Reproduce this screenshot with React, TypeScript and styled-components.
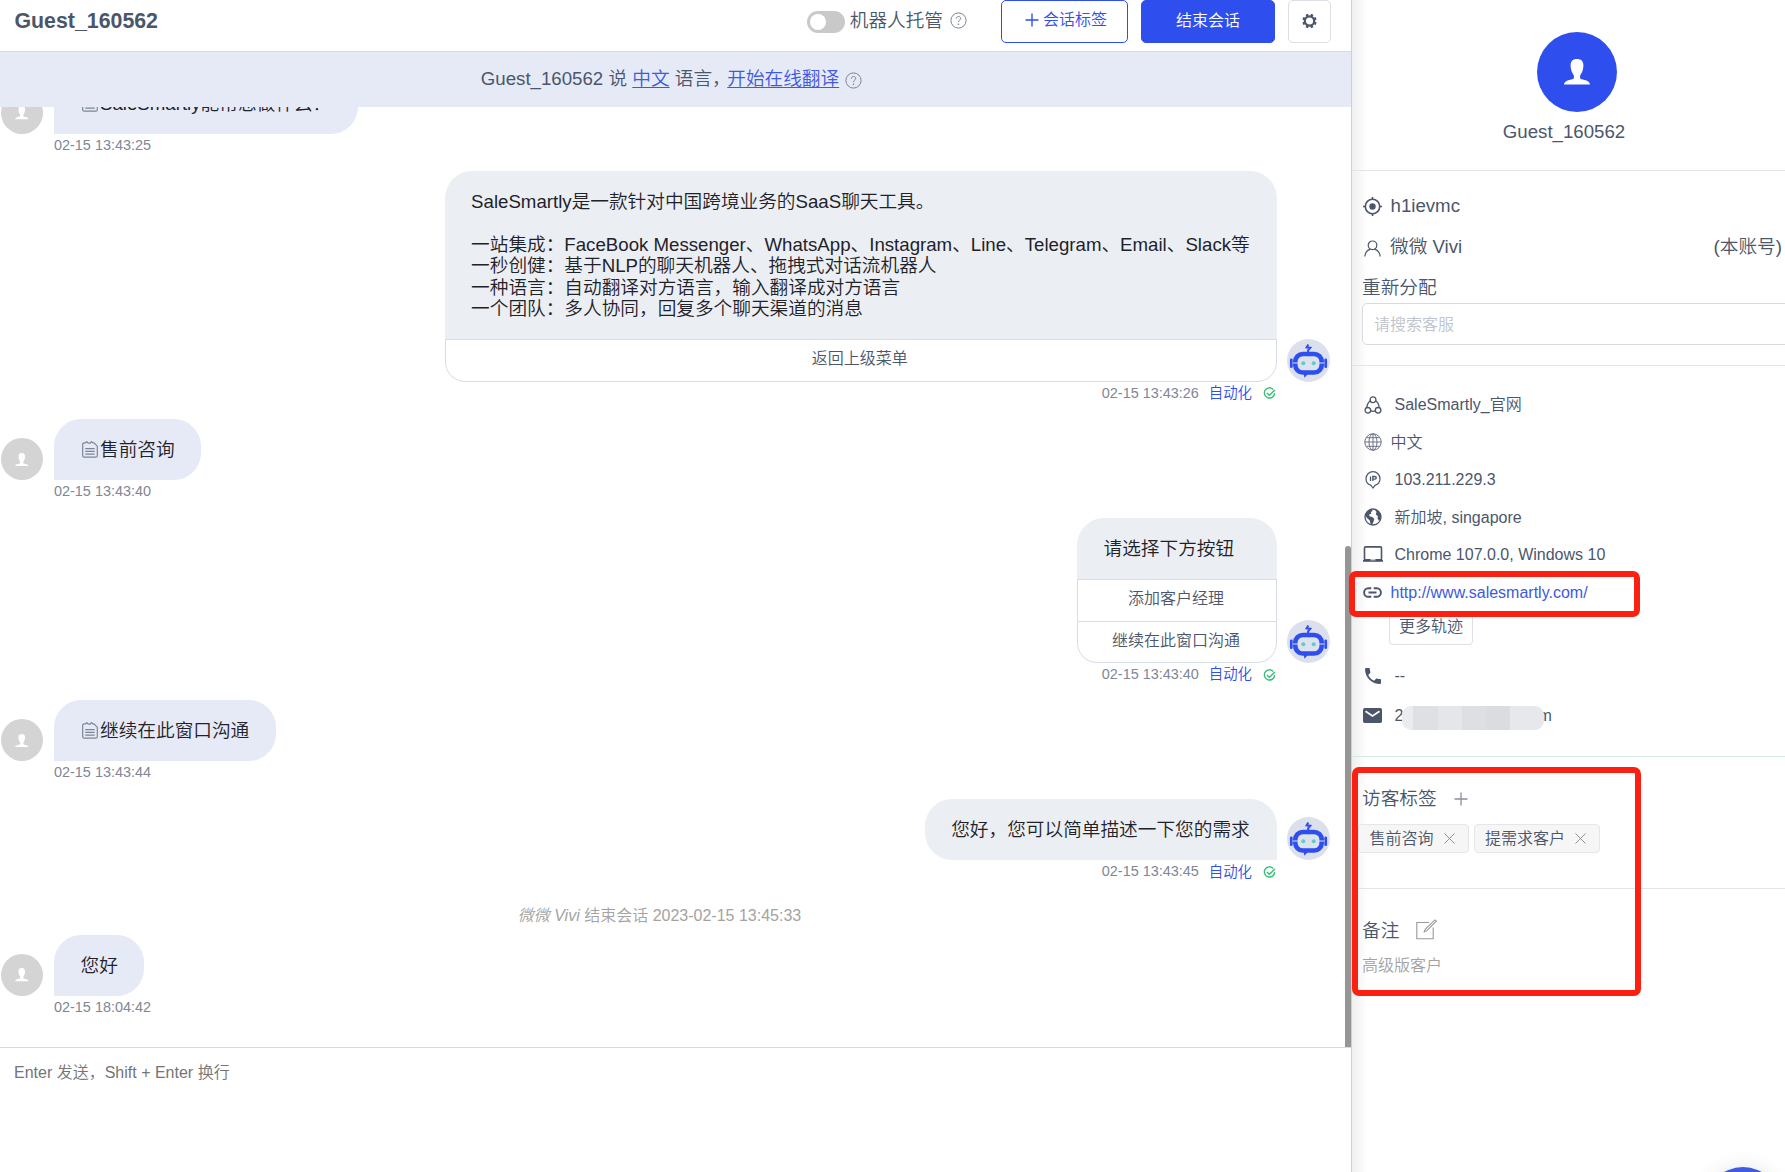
import React from "react";
import styled, { createGlobalStyle, css } from "styled-components";

const Global = createGlobalStyle`
  html, body { margin: 0; padding: 0; background: #fff; }
  body {
    font-family: "Liberation Sans", "Noto Sans CJK SC", sans-serif;
    font-size: 16px;
    font-weight: 350;
    line-height: 1.2;
    color: #4b566b;
    overflow: hidden;
  }
  * { box-sizing: border-box; }
`;

const Screen = styled.div`
  position: relative;
  display: flex;
  width: 1785px;
  height: 1172px;
  overflow: hidden;
  background: #fff;
`;

/* ---------- chat column ---------- */

const Chat = styled.main`
  display: flex;
  flex-direction: column;
  width: 1352px;
  flex: none;
  border-right: 1px solid #cfd0d4;
`;

const Header = styled.header`
  display: flex;
  align-items: flex-start;
  height: 52px;
  flex: none;
  padding: 0 20px 0 14.500px;
  border-bottom: 1px solid #d3dae6;
`;

const Title = styled.h1`
  margin: 0 auto 0 0;
  font-size: 21.33px;
  line-height: 42px;
  font-weight: 700;
`;

const BotSwitch = styled.div`
  display: flex;
  align-items: center;
  height: 42px;
  font-size: 18.67px;
  margin-right: 34.500px;
  svg { margin: 0 0 1px 6.500px; }
`;

const Toggle = styled.span`
  display: flex;
  align-items: center;
  width: 37.5px;
  height: 22px;
  padding: 0 3px;
  margin: 2px 5px 0 0;
  border-radius: 11px;
  background: #c9c9c9;
  &::before {
    content: "";
    width: 16px;
    height: 16px;
    border-radius: 50%;
    background: #fff;
  }
`;

const Button = styled.button<{ $kind: "outline" | "solid" | "icon" }>`
  display: flex;
  align-items: center;
  justify-content: center;
  height: 43px;
  padding: 0 0 2px;
  border-radius: 5px;
  font: inherit;
  font-size: 16px;
  border: 1px solid #2f4eee;
  ${(p) =>
    p.$kind === "outline" &&
    css`width: 127px; background: #fff; color: #2f4eee; gap: 4px; margin-right: 13px; padding: 0 0 4px 3px;`}
  ${(p) =>
    p.$kind === "solid" &&
    css`width: 134px; background: #2f4eee; color: #fff; margin-right: 13px;`}
  ${(p) =>
    p.$kind === "icon" &&
    css`width: 43px; background: #fff; color: #4b566b; border-color: #dcdfe6; padding-bottom: 1px;`}
`;

const Banner = styled.div`
  display: flex;
  align-items: center;
  justify-content: center;
  height: 55px;
  flex: none;
  padding-right: 8px;
  background: #e5eaf6;
  font-size: 18.67px;
  white-space: pre;
  svg { margin: 1px 0 0 6px; }
`;

const Link = styled.a<{ $tight?: boolean }>`
  margin-left: ${(p) => (p.$tight ? -3.5 : 0)}px;
  color: #4059e0;
  text-decoration: underline;
  text-underline-offset: 2px;
  text-decoration-thickness: 1px;
`;

const Messages = styled.section`
  display: flex;
  flex-direction: column;
  justify-content: flex-end;
  height: 940px;
  flex: none;
  padding-bottom: 51px;
  position: relative;
  overflow: hidden;
`;

const ScrollThumb = styled.div`
  position: absolute;
  right: 0;
  bottom: 0;
  width: 6px;
  height: 501px;
  border-radius: 3px 3px 0 0;
  background: #969696;
`;

const Message = styled.div<{ $out?: boolean; $gap?: number }>`
  display: flex;
  flex: none;
  align-items: flex-end;
  flex-direction: ${(p) => (p.$out ? "row-reverse" : "row")};
  gap: ${(p) => (p.$out ? 10 : 11)}px;
  padding: ${(p) => (p.$out ? "0 21px 0 0" : "0 0 0 1px")};
  margin-bottom: ${(p) => p.$gap ?? 14.5}px;
`;

const GuestAvatar = styled.div`
  display: flex;
  align-items: center;
  justify-content: center;
  width: 42px;
  height: 42px;
  margin-bottom: 23px;
  border-radius: 50%;
  background: #d4d4d4;
`;

const BotAvatar = styled.div`
  width: 43px;
  height: 43px;
  margin-bottom: 23px;
`;

const Stack = styled.div<{ $out?: boolean }>`
  display: flex;
  flex-direction: column;
  align-items: ${(p) => (p.$out ? "flex-end" : "flex-start")};
`;

const Bubble = styled.div<{ $out?: boolean; $menu?: boolean }>`
  overflow: hidden;
  min-width: ${(p) => (p.$menu ? 200 : 0)}px;
  border-radius: ${(p) => (p.$menu ? "27px 27px 20px 20px" : p.$out ? "27px 27px 0 27px" : "27px 27px 27px 0")};
  background: ${(p) => (p.$out ? "#ebeff4" : "#e5eaf6")};
`;

const BubbleText = styled.div<{ $out?: boolean }>`
  display: flex;
  align-items: center;
  padding: 20px ${(p) => (p.$out ? 27.3 : 26.5)}px 20px 26.500px;
  font-size: 18.67px;
  line-height: 21.33px;
  color: #1f2329;
  white-space: pre;
`;

const MenuOption = styled.div`
  height: 41.3px;
  padding: 0 2px 2px 0;
  line-height: 37px;
  text-align: center;
  font-size: 16px;
  background: #fff;
  border: 1px solid #d8dce3;
  border-bottom-width: 0;
  &:last-child {
    border-bottom-width: 1px;
    border-radius: 0 0 20px 20px;
    height: 42.5px;
  }
`;

const Meta = styled.div`
  display: flex;
  align-items: center;
  height: 23px;
  font-size: 14.43px;
  color: #808695;
  svg { margin: 1px 1px 0 0; }
`;

const MetaAuto = styled.span`
  margin: 1px 11px 0 10px;
  font-size: 14.4px;
  color: #2f4eee;
`;

const SystemNote = styled.div`
  height: 24px;
  flex: none;
  margin: 6px 0 7px;
  padding-right: 32px;
  line-height: 24px;
  text-align: center;
  color: #a3a3a3;
`;

const Composer = styled.div`
  flex: 1;
  border-top: 1px solid #d9d9d9;
  padding: 13px 14px;
  line-height: 24px;
  color: #757575;
`;

/* ---------- visitor column ---------- */

const Visitor = styled.aside`
  flex: 1;
  min-width: 0;
  overflow: hidden;
  background: linear-gradient(to right, #efeff0, #fff 15px);
`;

const Section = styled.section<{ $h: number; $tint?: string }>`
  height: ${(p) => p.$h}px;
  border-bottom: 1px solid ${(p) => p.$tint ?? "#e2e5e8"};
  padding-left: 10px;
`;

const Profile = styled(Section)`
  display: flex;
  flex-direction: column;
  align-items: center;
  width: 450px;
  padding: 32px 0 0;
`;

const ProfileAvatar = styled.div`
  display: flex;
  align-items: center;
  justify-content: center;
  width: 80px;
  height: 80px;
  border-radius: 50%;
  background: #2f4eee;
`;

const ProfileName = styled.div`
  margin-top: 7.500px;
  padding-right: 26px;
  font-size: 18.67px;
  line-height: 24px;
`;

const Row = styled.div<{ $h: number; $big?: boolean; $drop?: number }>`
  display: flex;
  align-items: center;
  height: ${(p) => p.$h}px;
  padding: ${(p) => p.$drop ?? 0}px 3px 0 0;
  font-size: ${(p) => (p.$big ? 18.67 : 16)}px;
  white-space: nowrap;
`;

const IconCell = styled.span<{ $gap?: number }>`
  display: flex;
  align-items: center;
  justify-content: center;
  width: 21px;
  margin-right: ${(p) => p.$gap ?? 11.5}px;
  flex: none;
`;

const HeadingIcon = styled.span<{ $lift?: number }>`
  display: flex;
  margin: 0 0 ${(p) => p.$lift ?? 0}px 17px;
`;

const Mine = styled.span`
  margin-left: auto;
`;

const Search = styled.div`
  width: 460px;
  height: 42px;
  padding-left: 11px;
  border: 1px solid #d8dbe0;
  border-radius: 5px;
  line-height: 41px;
  color: #c0c4cc;
  background: #fff;
`;

const PageLink = styled.a`
  color: #4059e0;
`;

const MoreButton = styled.div`
  width: 84px;
  height: 33.500px;
  margin: 0 0 0 27px;
  border: 1px solid #dcdfe6;
  border-radius: 4px;
  line-height: 30px;
  text-align: center;
`;

const Mosaic = styled.span`
  display: flex;
  width: 142px;
  height: 24px;
  margin: 3px -6px 0 -1px;
  z-index: 1;
  border-radius: 9px;
  overflow: hidden;
`;

const Block = styled.i<{ $w: number; $c: string }>`
  width: ${(p) => p.$w}px;
  background: ${(p) => p.$c};
`;

const Tags = styled.div`
  display: flex;
  gap: 5px;
  margin: 9px 0 0 -4px;
`;

const Tag = styled.span`
  display: flex;
  align-items: center;
  height: 29px;
  padding: 1px 13px 0 10.500px;
  gap: 10px;
  border: 1px solid #e6e6e8;
  border-radius: 4px;
  background: #f6f6f7;
  svg { margin-bottom: 1px; }
`;

const Note = styled.div`
  line-height: 24px;
  margin-top: 7px;
  color: #a3a3a3;
`;

/* Red annotation frames drawn over the interface */
const Highlight = styled.div<{ $top: number; $left: number; $w: number; $h: number }>`
  position: absolute;
  z-index: 3;
  top: ${(p) => p.$top}px;
  left: ${(p) => p.$left}px;
  width: ${(p) => p.$w}px;
  height: ${(p) => p.$h}px;
  border: 6px solid #fb2012;
  border-radius: 7px;
`;

const Launcher = styled.div`
  position: absolute;
  left: 1705px;
  top: 1167px;
  width: 76px;
  height: 76px;
  border-radius: 50%;
  background: #3f5be0;
  box-shadow: 0 0 20px rgba(0, 0, 0, 0.1);
`;

/* ---------- icons ---------- */

const Person = ({ size }: { size: number }) => (
  <svg width={size} height={size} viewBox="0 0 26 26" fill="#fff">
    <path d="M13 0c4 0 6.400 2 6.400 6.200 0 4.500-1.400 7.300-2.900 9.600-.8 1.300-.5 3.900.3 4.300 1.800.8 8.700 1 9.200 5.400H0c.5-4.400 7.400-4.600 9.200-5.400.8-.4 1.100-3 .3-4.300C8 13.500 6.600 10.700 6.600 6.200 6.600 2 9 0 13 0z" />
  </svg>
);

const Help = () => (
  <svg width="17" height="17" viewBox="0 0 17 17" fill="none" stroke="#7b8496" strokeWidth="1">
    <circle cx="8.500" cy="8.500" r="7.600" />
    <path d="M6.300 6.700c0-1.300.9-2.200 2.200-2.200s2.200.8 2.200 2c0 1.600-2.200 1.700-2.200 3.500" />
    <circle cx="8.500" cy="12.200" r=".4" fill="#7b8496" />
  </svg>
);

const Gear = () => (
  <svg width="16" height="16" viewBox="0 0 16 16" fill="none" stroke="#4b566b">
    <circle cx="7.500" cy="8" r="4.700" strokeWidth="2.200" />
    {[0, 45, 90, 135, 180, 225, 270, 315].map((a) => (
      <path key={a} d="M7.500 0.800v2" strokeWidth="2.600" transform={`rotate(${a + 22.5} 7.500 8)`} />
    ))}
  </svg>
);

const Plus = ({ color, w = 1.4 }: { color: string; w?: number }) => (
  <svg width="14" height="14" viewBox="0 0 14 14" stroke={color} strokeWidth={w}>
    <path d="M7 .5v13M.5 7h13" />
  </svg>
);

const Close = () => (
  <svg width="11" height="11" viewBox="0 0 11 11" stroke="#909399" strokeWidth="1">
    <path d="M.5.5l10 10M10.500.5l-10 10" />
  </svg>
);

const DocBox = styled.span`
  display: flex;
  align-items: center;
  width: 19.500px;
  padding-left: 1.500px;
`;

const Doc = () => (
  <DocBox>
    <svg width="16" height="17" viewBox="0 0 16 17" fill="none" stroke="#7d8596" strokeWidth="1.200">
      <path d="M3.500 1.800H2.200C1.300 1.800.7 2.400.7 3.300v11.400c0 .9.6 1.500 1.500 1.500h11.600c.9 0 1.500-.6 1.500-1.500V5.200l-3.400-3.400h-.9" />
      <path d="M3.400 2.200l1.300-1.600 1.500 1.600h2l1.300-1.600 1.600 1.600" />
      <path d="M3.300 7.700h9.400M3.300 10.400h9.400M3.300 13.100h9.400" />
    </svg>
  </DocBox>
);

const Robot = () => (
  <svg width="43" height="43" viewBox="0 0 43 43">
    <circle cx="21.500" cy="21.500" r="21.500" fill="#dbe0ec" />
    <path d="M21.300 5.500l-1.700 2.800 3.700.4-2.200 2.700v3" fill="none" stroke="#2f4eee" strokeWidth="2" />
    <path d="M16.500 34h5.200l-4.200 4.700z" fill="#2f4eee" />
    <rect x="8.300" y="15" width="26.400" height="18.500" rx="7.500" fill="#dbe3ee" stroke="#2f4eee" strokeWidth="4.600" />
    <path d="M17.800 13.400l3.600 4.200 3.600-4.200z" fill="#2f4eee" />
    <path d="M4.300 20.800v6.900M38.700 20.800v6.900" stroke="#2f4eee" strokeWidth="2.800" strokeLinecap="round" />
    <path d="M5.500 24h5.500M32 24h5.500" stroke="#dbe0ec" strokeWidth="1.200" />
    <circle cx="16.300" cy="24.300" r="2" fill="#6cc5c8" />
    <circle cx="26.700" cy="24.300" r="2" fill="#6cc5c8" />
  </svg>
);

const Sent = () => (
  <svg width="13" height="13" viewBox="0 0 14 14" fill="none" stroke="#35c07a" strokeWidth="1.500">
    <path d="M11 2.600A5.500 5.500 0 1 0 12.500 6.600" />
    <path d="M4.200 6.500l2.600 2.500 6-5.800" />
  </svg>
);

const ink = "#4b566b";

const Target = () => (
  <svg width="19" height="19" viewBox="0 0 19 19" fill="none" stroke={ink} strokeWidth="1.600">
    <circle cx="9.500" cy="9.500" r="7.200" />
    <circle cx="9.500" cy="9.500" r="3.200" fill={ink} stroke="none" />
    <path d="M9.500 0v3M9.500 16v3M0 9.500h3M16 9.500h3" />
  </svg>
);

const User = () => (
  <svg width="17" height="20" viewBox="0 -3 17 20" fill="none" stroke={ink} strokeWidth="1.200">
    <circle cx="8.500" cy="5.300" r="4.300" />
    <path d="M.8 16.500c.4-4.200 3-6.500 5.700-7.300M16.200 16.500c-.4-4.200-3-6.500-5.700-7.300" />
  </svg>
);

const Channel = () => (
  <svg width="18" height="18" viewBox="0 0 18 18" fill="none" stroke={ink} strokeWidth="1.300">
    <circle cx="9" cy="3.700" r="2.900" />
    <circle cx="3.900" cy="14.300" r="2.800" />
    <circle cx="14.100" cy="14.300" r="2.800" />
    <path d="M6.300 4.800C4.300 6.300 3 8.800 2.900 11.600M11.700 4.800c2 1.500 3.300 4 3.400 6.800M6.700 14.900c1.400.5 3.200.5 4.600 0" />
  </svg>
);

const Language = () => (
  <svg width="18" height="18" viewBox="0 0 18 18" fill="none" stroke="#6b7485" strokeWidth="1">
    <circle cx="9" cy="9" r="8.200" />
    <ellipse cx="9" cy="9" rx="4" ry="8.200" />
    <path d="M9 .8v16.400M.8 9h16.400M2.300 4.700h13.400M2.300 13.300h13.400" />
  </svg>
);

const IpPin = () => (
  <svg width="16" height="18" viewBox="0 0 16 18" fill="none" stroke={ink} strokeWidth="1.200">
    <path d="M8 17l-2.300-2.900C2.800 13.200 1 10.600 1 7.700a7 7 0 0 1 14 0c0 2.900-1.800 5.500-4.700 6.400z" />
    <path d="M5.500 5.500v4.400M7.800 9.900V5.500h2c2 0 2 2.600 0 2.600h-2" strokeWidth="1.300" />
  </svg>
);

const Earth = () => (
  <svg width="18" height="18" viewBox="0 0 18 18">
    <circle cx="9" cy="9" r="8" fill="none" stroke={ink} strokeWidth="1.300" />
    <path
      fill={ink}
      d="M1 7.500C1.800 4.500 4 2 7.500 1.200L8.600 2.500 7 4.200 7.300 5.800 5.200 6.600 5.500 8.200 8.300 9l2 2-.8 2.700L8 17C6.500 16.500 6 14.500 5.800 12.500L3 10zM10.500 1.200c3.500.5 6 3.300 6.600 6.300L16.500 12l-1.500.8-1.600-2.500.6-2-2.200-1.800L12.500 4z"
    />
  </svg>
);

const Laptop = () => (
  <svg width="20" height="17" viewBox="0 1 20 17" fill="none" stroke={ink} strokeWidth="1.600">
    <rect x="1.500" y="1.900" width="17" height="13" rx="1" />
    <path d="M0 15.800h20" strokeWidth="2" />
    <path d="M7.500 14.800h5" stroke="#fff" strokeWidth="1" />
  </svg>
);

const Chain = () => (
  <svg width="19" height="11" viewBox="0 0 19 11" fill="none" stroke={ink} strokeWidth="1.900">
    <path d="M8.300 1.200h-3a4.200 4.300 0 0 0 0 8.600h3M10.700 1.200h3a4.200 4.300 0 0 1 0 8.600h-3M5.500 5.500h8" />
  </svg>
);

const Phone = () => (
  <svg width="16" height="16" viewBox="3 3 18 18" fill={ink}>
    <path d="M6.620 10.790c1.440 2.830 3.760 5.140 6.590 6.590l2.200-2.200c.27-.27.67-.36 1.020-.24 1.120.37 2.330.57 3.570.57.55 0 1 .45 1 1V20c0 .55-.45 1-1 1-9.390 0-17-7.610-17-17 0-.55.45-1 1-1h3.500c.55 0 1 .45 1 1 0 1.250.2 2.450.57 3.570.11.35.03.74-.25 1.020l-2.200 2.200z" />
  </svg>
);

const Mail = () => (
  <svg width="19" height="17" viewBox="0 0 19 17">
    <rect width="19" height="15" rx="1.800" fill={ink} />
    <path d="M2.500 3.200l7 4.800 7-4.800" fill="none" stroke="#fff" strokeWidth="1.700" />
  </svg>
);

const Edit = () => (
  <svg width="21" height="21" viewBox="0 0 21 21" fill="none" stroke="#999" strokeWidth="1.100">
    <path d="M13 3.500H.8v16.200h16.400V8.500" />
    <path d="M8.300 12.800l.9-2.400 9.700-9.500 1.400 1.300-9.600 9.700z" />
  </svg>
);

/* ---------- composition ---------- */

const OutMeta = ({ time }: { time: string }) => (
  <Meta>
    {time}
    <MetaAuto>自动化</MetaAuto>
    <Sent />
  </Meta>
);

type InProps = { text: string; time: string; doc?: boolean; gap?: number };
const Incoming = ({ text, time, doc, gap }: InProps) => (
  <Message $gap={gap}>
    <GuestAvatar>
      <Person size={13.500} />
    </GuestAvatar>
    <Stack>
      <Bubble>
        <BubbleText>
          {doc && <Doc />}
          {text}
        </BubbleText>
      </Bubble>
      <Meta>{time}</Meta>
    </Stack>
  </Message>
);

type OutProps = { text: string; time: string; options?: string[]; gap?: number };
const Outgoing = ({ text, time, options = [], gap }: OutProps) => (
  <Message $out $gap={gap}>
    <BotAvatar>
      <Robot />
    </BotAvatar>
    <Stack $out>
      <Bubble $out $menu={options.length > 0}>
        <BubbleText $out>{text}</BubbleText>
        {options.map((o) => (
          <MenuOption key={o}>{o}</MenuOption>
        ))}
      </Bubble>
      <OutMeta time={time} />
    </Stack>
  </Message>
);

const intro = [
  "SaleSmartly是一款针对中国跨境业务的SaaS聊天工具。",
  "",
  "一站集成：FaceBook Messenger、WhatsApp、Instagram、Line、Telegram、Email、Slack等",
  "一秒创健：基于NLP的聊天机器人、拖拽式对话流机器人",
  "一种语言：自动翻译对方语言，输入翻译成对方语言",
  "一个团队：多人协同，回复多个聊天渠道的消息",
].join("\n");

const mosaic: [number, string][] = [
  [11, "#ebecef"],
  [25, "#dfe0e4"],
  [24, "#e5e6e9"],
  [24, "#dedfe3"],
  [24, "#dbdce0"],
  [34, "#e7e8eb"],
];

export default function App() {
  return (
    <Screen>
      <Global />
      <Chat>
        <Header>
          <Title>Guest_160562</Title>
          <BotSwitch>
            <Toggle />
            机器人托管
            <Help />
          </BotSwitch>
          <Button $kind="outline">
            <Plus color="#2f4eee" />
            会话标签
          </Button>
          <Button $kind="solid">结束会话</Button>
          <Button $kind="icon">
            <Gear />
          </Button>
        </Header>
        <Banner>
          Guest_160562 说 <Link>中文</Link> 语言，<Link $tight>开始在线翻译</Link>
          <Help />
        </Banner>
        <Messages>
          <Incoming doc text="SaleSmartly能帮您做什么？" time="02-15 13:43:25" />
          <Outgoing text={intro} time="02-15 13:43:26" options={["返回上级菜单"]} gap={14.200} />
          <Incoming doc text="售前咨询" time="02-15 13:43:40" />
          <Outgoing
            text="请选择下方按钮"
            time="02-15 13:43:40"
            options={["添加客户经理", "继续在此窗口沟通"]}
            gap={14}
          />
          <Incoming doc text="继续在此窗口沟通" time="02-15 13:43:44" />
          <Outgoing text="您好，您可以简单描述一下您的需求" time="02-15 13:43:45" />
          <SystemNote>
            <em>微微 Vivi</em> 结束会话 2023-02-15 13:45:33
          </SystemNote>
          <Incoming text="您好" time="02-15 18:04:42" gap={-23} />
          <ScrollThumb />
        </Messages>
        <Composer>Enter 发送，Shift + Enter 换行</Composer>
      </Chat>

      <Visitor>
        <Profile $h={171}>
          <ProfileAvatar>
            <Person size={26} />
          </ProfileAvatar>
          <ProfileName>Guest_160562</ProfileName>
        </Profile>

        <Section $h={195}>
          <Row $h={14} />
          <Row $h={41} $big $drop={1}>
            <IconCell $gap={7.500}><Target /></IconCell>
            h1ievmc
          </Row>
          <Row $h={41} $big $drop={1}>
            <IconCell $gap={7}><User /></IconCell>
            微微 Vivi
            <Mine>(本账号)</Mine>
          </Row>
          <Row $h={36} $big $drop={7}>重新分配</Row>
          <Search>请搜索客服</Search>
        </Section>

        <Section $h={391} $tint="#d3ebdf">
          <Row $h={20} />
          <Row $h={37.5}><IconCell><Channel /></IconCell>SaleSmartly_官网</Row>
          <Row $h={37.5}><IconCell $gap={7.500}><Language /></IconCell>中文</Row>
          <Row $h={37.5}><IconCell><IpPin /></IconCell>103.211.229.3</Row>
          <Row $h={37.5}><IconCell><Earth /></IconCell>新加坡, singapore</Row>
          <Row $h={37.5}><IconCell><Laptop /></IconCell>Chrome 107.0.0, Windows 10</Row>
          <Row $h={37.5}><IconCell $gap={7.500}><Chain /></IconCell><PageLink>http://www.salesmartly.com/</PageLink></Row>
          <MoreButton>更多轨迹</MoreButton>
          <Row $h={11.5} />
          <Row $h={40}><IconCell><Phone /></IconCell>--</Row>
          <Row $h={40}>
            <IconCell><Mail /></IconCell>2
            <Mosaic>{mosaic.map(([w, c], i) => <Block key={i} $w={w} $c={c} />)}</Mosaic>m
          </Row>
        </Section>

        <Section $h={132}>
          <Row $h={24} />
          <Row $h={34} $big $drop={2}>
            访客标签
            <HeadingIcon><Plus color="#8a8f99" w={1.3} /></HeadingIcon>
          </Row>
          <Tags>
            <Tag>售前咨询<Close /></Tag>
            <Tag>提需求客户<Close /></Tag>
          </Tags>
        </Section>

        <Section $h={283} $tint="transparent">
          <Row $h={24} />
          <Row $h={34} $big $drop={2}>
            备注
            <HeadingIcon $lift={4}><Edit /></HeadingIcon>
          </Row>
          <Note>高级版客户</Note>
        </Section>
      </Visitor>

      <Highlight $left={1348.5} $top={570.5} $w={291} $h={46} />
      <Highlight $left={1351.5} $top={766.5} $w={289} $h={229} />
      <Launcher />
    </Screen>
  );
}
